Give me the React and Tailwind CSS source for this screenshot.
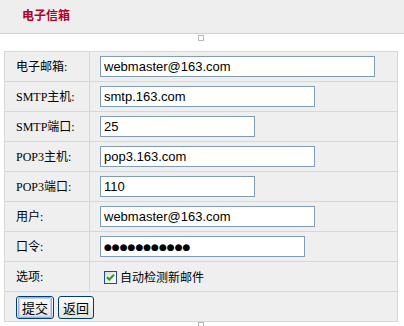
import React from "react";

const labelFont = { fontFamily: '"Liberation Serif", "Noto Sans CJK SC", serif' };

function Row({ label, children }) {
  return (
    <div className="flex h-[30px] border-b border-[#d7d7d7]">
      <div
        className="w-[85px] shrink-0 border-r border-[#d7d7d7] pl-[11px] flex items-center text-[12px] text-black"
        style={labelFont}
      >
        {label}
      </div>
      <div className="flex-1 pl-[10px] flex items-center">{children}</div>
    </div>
  );
}

function Field({ value, w, dots }) {
  return (
    <input
      readOnly
      value={value}
      className={`h-[21px] border border-[#7f9db9] bg-white px-[3px] text-black outline-none ${w} ${
        dots ? "text-[9px]" : "text-[13px]"
      }`}
      style={{
        fontFamily: dots
          ? '"DejaVu Sans", sans-serif'
          : '"Liberation Sans", "Noto Sans CJK SC", sans-serif',
      }}
    />
  );
}

function XpButton({ children, focused }) {
  return (
    <button
      className={`h-[23px] rounded-[3px] border border-[#003c74] bg-gradient-to-b from-white to-[#e3e2da] text-[13px] leading-none text-black ${
        focused ? "px-[1px]" : "px-0"
      }`}
      style={{ fontFamily: '"Noto Sans CJK SC", sans-serif' }}
    >
      <span
        className={`flex h-full items-center rounded-[2px] px-[3px] ${
          focused ? "border border-[#97aef0] shadow-[inset_0_0_0_1px_#c0d0f7]" : "border border-transparent"
        }`}
      >
        {children}
      </span>
    </button>
  );
}

export default function App() {
  return (
    <div className="w-[404px] h-[326px] bg-white overflow-hidden relative">
      <div className="h-[34px] bg-[#eeeeee] border-b border-[#d0d0d0] pl-[22px] pt-[2px]">
        <span
          className="text-[12px] font-bold text-[#b1002a]"
          style={{ fontFamily: '"Noto Sans CJK SC", sans-serif' }}
        >
          电子信箱
        </span>
      </div>
      <div className="h-[17px] flex justify-center pt-[1px]">
        <span className="ml-[-2px] block w-[6px] h-[6px] border border-[#b8b8b8] bg-white"></span>
      </div>
      <div className="ml-[4px] w-[394px] bg-[#efefef] border border-b-0 border-[#d7d7d7]">
        <Row label="电子邮箱:">
          <Field value="webmaster@163.com" w="w-[275px]" />
        </Row>
        <Row label="SMTP主机:">
          <Field value="smtp.163.com" w="w-[215px]" />
        </Row>
        <Row label="SMTP端口:">
          <Field value="25" w="w-[155px]" />
        </Row>
        <Row label="POP3主机:">
          <Field value="pop3.163.com" w="w-[215px]" />
        </Row>
        <Row label="POP3端口:">
          <Field value="110" w="w-[155px]" />
        </Row>
        <Row label="用户:">
          <Field value="webmaster@163.com" w="w-[215px]" />
        </Row>
        <Row label="口令:">
          <Field value="●●●●●●●●●●●" w="w-[205px]" dots />
        </Row>
        <Row label="选项:">
          <label className="flex items-center gap-[3px] pl-[4px] pt-[1px]">
            <span className="w-[13px] h-[13px] border border-[#1c5180] bg-gradient-to-br from-[#dcdcd7] to-white flex items-center justify-center">
              <svg width="9" height="9" viewBox="0 0 9 9">
                <path d="M1 4.2 L3.3 6.5 L8 1.8" stroke="#21a121" strokeWidth="2" fill="none" />
              </svg>
            </span>
            <span
              className="text-[12px] text-black"
              style={{ fontFamily: '"Noto Sans CJK SC", sans-serif' }}
            >
              自动检测新邮件
            </span>
          </label>
        </Row>
        <div className="h-[30px] border-b border-[#d7d7d7] flex items-center gap-[4px] pl-[11px] pt-[2px]">
          <XpButton focused>提交</XpButton>
          <XpButton>返回</XpButton>
        </div>
      </div>
      <div className="flex justify-center">
        <span className="ml-[-2px] block w-[6px] h-[6px] border border-[#b8b8b8] bg-white"></span>
      </div>
    </div>
  );
}
